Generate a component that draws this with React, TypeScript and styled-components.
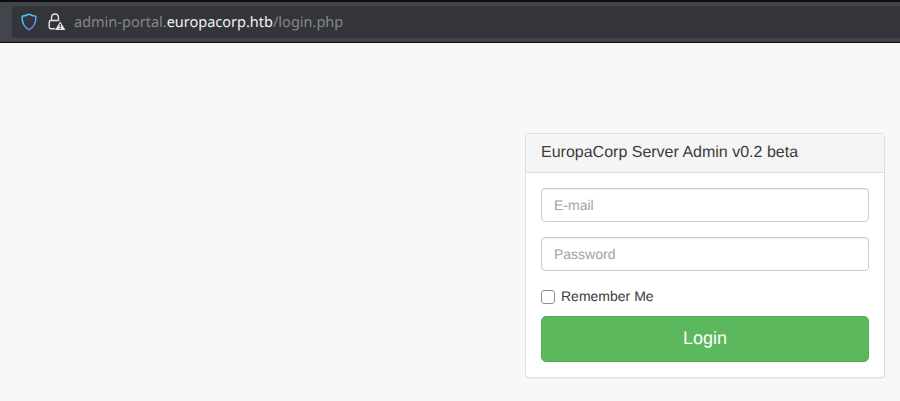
import React from "react";
import styled, { createGlobalStyle } from "styled-components";

const GlobalStyle = createGlobalStyle`
  html, body {
    margin: 0;
    height: 100%;
    background: #f8f8f8;
    overflow: hidden;
  }
  * {
    box-sizing: border-box;
  }
`;

const ShieldIcon = () => (
  <svg width="16" height="18" viewBox="0 0 16 18" fill="none">
    <defs>
      <linearGradient id="shieldStroke" x1="0" y1="0" x2="0.5" y2="1">
        <stop offset="0" stopColor="#50d8f8" />
        <stop offset="0.7" stopColor="#55b0f5" />
        <stop offset="1" stopColor="#7d78f0" />
      </linearGradient>
    </defs>
    <path
      d="M8 1.2 C10 2.4 12.4 3 14.8 3.2 C15.2 9 13.2 14 8 16.8 C2.8 14 0.8 9 1.2 3.2 C3.6 3 6 2.4 8 1.2 Z"
      stroke="url(#shieldStroke)"
      strokeWidth="1.4"
      strokeLinejoin="round"
    />
  </svg>
);

const LockWarningIcon = () => (
  <svg width="18" height="18" viewBox="0 0 18 18" fill="none">
    <path
      d="M3.5 7.5 V5 C3.5 2.6 5 1 7 1 C9 1 10.5 2.6 10.5 5 V7.5"
      stroke="#e4e4e6"
      strokeWidth="1.4"
    />
    <path
      d="M6.5 15.8 H3 C2 15.8 1.2 15 1.2 14 V9.2 C1.2 8.2 2 7.5 3 7.5 H10.5"
      stroke="#e4e4e6"
      strokeWidth="1.4"
      strokeLinecap="round"
    />
    <path d="M12.2 8.6 L17.4 17 H7 Z" fill="#e4e4e6" />
    <rect x="11.6" y="11" width="1.2" height="3.2" fill="#33353a" />
    <rect x="11.6" y="14.8" width="1.2" height="1.2" fill="#33353a" />
  </svg>
);

const App = () => {
  return (
    <>
      <GlobalStyle />
      <Toolbar>
        <UrlBar>
          <ShieldIcon />
          <LockWarningIcon />
          <Url>
            admin-portal.<UrlHost>europacorp.htb</UrlHost>/login.php
          </Url>
        </UrlBar>
      </Toolbar>
      <Page>
        <Panel>
          <PanelHeading>EuropaCorp Server Admin v0.2 beta</PanelHeading>
          <PanelBody>
            <TextInput type="email" placeholder="E-mail" />
            <TextInput type="password" placeholder="Password" />
            <RememberRow>
              <CheckBox type="checkbox" />
              Remember Me
            </RememberRow>
            <LoginButton type="button">Login</LoginButton>
          </PanelBody>
        </Panel>
      </Page>
    </>
  );
};

export default App;

const Toolbar = styled.div`
  height: 43px;
  padding: 4px 0 4px 12px;
  background: #42454c;
  border-top: 2px solid #0c0c0d;
  border-bottom: 1px solid #0c0c0d;
`;

const UrlBar = styled.div`
  display: flex;
  align-items: center;
  height: 32px;
  padding-left: 9px;
  background: #33353a;
  border-radius: 4px 0 0 4px;

  svg:first-child {
    margin-right: 11px;
  }
`;

const Url = styled.div`
  margin-left: 8px;
  color: #85868a;
  font-family: "Noto Sans", "Open Sans", sans-serif;
  font-size: 14.5px;
  text-rendering: geometricPrecision;
  white-space: nowrap;
`;

const UrlHost = styled.span`
  color: #f2f2f3;
`;

const Page = styled.main`
  display: flex;
  justify-content: flex-end;
  padding: 90px 15px 0 0;
  font-family: "Liberation Sans", Arial, sans-serif;
  text-rendering: geometricPrecision;
`;

const Panel = styled.section`
  width: 360px;
  height: 245px;
  background: #fff;
  border: 1px solid #ddd;
  border-radius: 4px;
  box-shadow: 0 1px 1px rgba(0, 0, 0, 0.05);
`;

const PanelHeading = styled.h3`
  margin: 0;
  height: 39px;
  padding: 10px 15px;
  background: #f5f5f5;
  border-bottom: 1px solid #ddd;
  border-radius: 3px 3px 0 0;
  color: #3c3c3c;
  font-size: 16px;
  font-weight: 400;
  line-height: 18px;
`;

const PanelBody = styled.div`
  display: flex;
  flex-direction: column;
  padding: 15px;
`;

const TextInput = styled.input`
  width: 100%;
  height: 34px;
  margin-bottom: 15px;
  padding: 6px 12px;
  background: #fff;
  border: 1px solid #ccc;
  border-radius: 4px;
  box-shadow: inset 0 1px 1px rgba(0, 0, 0, 0.075);
  color: #555;
  font-family: inherit;
  font-size: 14px;
  text-rendering: inherit;
  outline: none;

  &::placeholder {
    color: #a2a2a2;
    opacity: 1;
  }
`;

const RememberRow = styled.label`
  display: flex;
  align-items: center;
  height: 20px;
  margin: 0 0 10px;
  color: #3c3c3c;
  font-size: 14px;
  line-height: 20px;
`;

const CheckBox = styled.input`
  appearance: none;
  width: 14px;
  height: 14px;
  margin: 2px 6px 0 0;
  background: #fff;
  border: 1px solid #8f8f9d;
  border-radius: 3px;
`;

const LoginButton = styled.button`
  width: 100%;
  height: 46px;
  padding: 10px 16px;
  background: #5cb85c;
  border: 1px solid #4cae4c;
  border-radius: 5px;
  color: #fff;
  font-family: inherit;
  font-size: 18px;
  line-height: 1.33;
  text-rendering: inherit;
`;
